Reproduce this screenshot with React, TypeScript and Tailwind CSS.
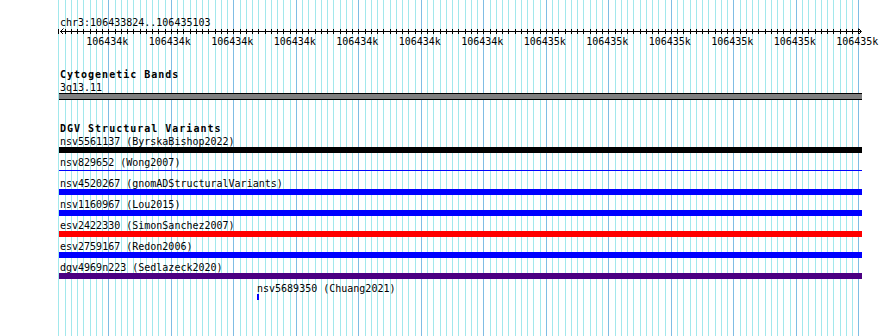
const MINOR = Array.from({ length: 129 }, (_, k) => k)
const gx = (k: number) => Math.round(58.3 + k * 6.25) + 0.5

const LABELS = [
  '106434k', '106434k', '106434k', '106434k', '106434k', '106434k', '106434k',
  '106435k', '106435k', '106435k', '106435k', '106435k', '106435k',
]

interface Feature {
  name: string
  kind: 'bar' | 'line'
  color: string
}

const FEATURES: Feature[] = [
  { name: 'nsv5561137 (ByrskaBishop2022)', kind: 'bar', color: 'bg-[#000000]' },
  { name: 'nsv829652 (Wong2007)', kind: 'line', color: 'bg-[#0000ff]' },
  { name: 'nsv4520267 (gnomADStructuralVariants)', kind: 'bar', color: 'bg-[#0000ff]' },
  { name: 'nsv1160967 (Lou2015)', kind: 'bar', color: 'bg-[#0000ff]' },
  { name: 'esv2422330 (SimonSanchez2007)', kind: 'bar', color: 'bg-[#ff0000]' },
  { name: 'esv2759167 (Redon2006)', kind: 'bar', color: 'bg-[#0000ff]' },
  { name: 'dgv4969n223 (Sedlazeck2020)', kind: 'bar', color: 'bg-[#4b0082]' },
]

// text line: 12px tall box, glyphs pushed down a touch to sit like the bitmap font
const line = 'h-[12px] pt-[3px] leading-[10px] whitespace-nowrap'

function Gridlines() {
  return (
    <svg className="absolute inset-0 pointer-events-none" width={890} height={336}>
      {MINOR.map((k) => (
        <line
          key={k}
          x1={gx(k)}
          x2={gx(k)}
          y1={0}
          y2={336}
          stroke={k % 10 === 8 ? '#7fbde4' : '#a2e8ec'}
          strokeWidth={1}
        />
      ))}
    </svg>
  )
}

function Ruler() {
  return (
    <svg width={890} height={7} className="block">
      <line x1={60} x2={861} y1={4.5} y2={4.5} stroke="#000" />
      {MINOR.map((k) => (
        <line key={k} x1={gx(k)} x2={gx(k)} y1={2} y2={7} stroke="#000" />
      ))}
      <polyline points="63.5,1.5 60.5,4.5 63.5,7.5" fill="none" stroke="#000" />
      <polyline points="858.5,1.5 861.5,4.5 858.5,7.5" fill="none" stroke="#000" />
    </svg>
  )
}

export default function App() {
  return (
    <div className="relative w-[890px] h-[336px] overflow-hidden bg-white text-black font-['DejaVu_Sans_Mono',monospace] text-[10px] leading-[12px]">
      <Gridlines />
      <div className="relative">
        <div className={`mt-[15px] pl-[60px] ${line}`}>chr3:106433824..106435103</div>
        <Ruler />
        <div className="flex pl-[76px]">
          {LABELS.map((l, i) => (
            <div key={i} className={`w-[62.5px] shrink-0 text-center ${line}`}>
              {l}
            </div>
          ))}
        </div>

        <div className="pl-[59px]">
          <div className={`mt-[21px] pl-px font-bold tracking-[1px] ${line}`}>Cytogenetic Bands</div>
          <div className={`mt-px pl-px ${line}`}>3q13.11</div>
          <div className="mt-px w-[803px] h-[7px] border-y border-black bg-[#808080]" />

          <div className={`mt-[21px] pl-px font-bold tracking-[1px] ${line}`}>DGV Structural Variants</div>
          <div className="mt-px flex flex-col">
            {FEATURES.map((f) => (
              <div key={f.name} className="flex flex-col pb-[2px]">
                <div className={`pl-px ${line}`}>{f.name}</div>
                {f.kind === 'bar' ? (
                  <div className={`mt-px w-[803px] h-[6px] ${f.color}`} />
                ) : (
                  <div className="mt-px h-[6px] pt-[2px]">
                    <div className={`w-[803px] h-px ${f.color}`} />
                  </div>
                )}
              </div>
            ))}
            <div className={`pl-[198px] ${line}`}>nsv5689350 (Chuang2021)</div>
            <div className="mt-px ml-[198px] w-[2px] h-[6px] bg-[#0000ff]" />
          </div>
        </div>
      </div>
    </div>
  )
}
